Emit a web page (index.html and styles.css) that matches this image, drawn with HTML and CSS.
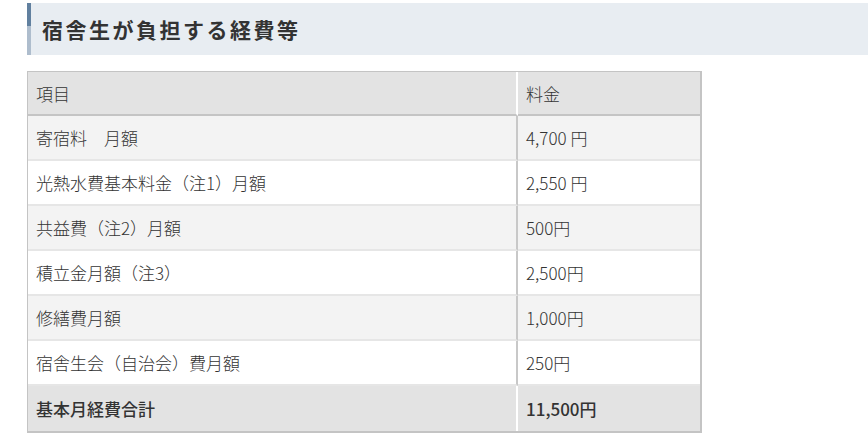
FILE: index.html
```html
<!DOCTYPE html>
<html lang="ja">
<head>
<meta charset="utf-8">
<link rel="stylesheet" href="styles.css">
</head>
<body>
<div class="page">
  <h2 class="heading">宿舎生が負担する経費等</h2>
  <table class="fees">
    <thead>
      <tr><th>項目</th><th>料金</th></tr>
    </thead>
    <tbody>
      <tr class="odd"><td>寄宿料　月額</td><td>4,700 円</td></tr>
      <tr class="even"><td>光熱水費基本料金（注1）月額</td><td>2,550 円</td></tr>
      <tr class="odd"><td>共益費（注2）月額</td><td>500円</td></tr>
      <tr class="even"><td>積立金月額（注3）</td><td>2,500円</td></tr>
      <tr class="odd"><td>修繕費月額</td><td>1,000円</td></tr>
      <tr class="even"><td>宿舎生会（自治会）費月額</td><td>250円</td></tr>
      <tr class="total"><td>基本月経費合計</td><td>11,500円</td></tr>
    </tbody>
  </table>
</div>
</body>
</html>
```
FILE: styles.css
```css
html, body {
  margin: 0;
  padding: 0;
  background: #fff;
  overflow: hidden;
}
body {
  font-family: "Noto Sans CJK JP", "Noto Sans", sans-serif;
  color: #333;
}
.page {
  padding: 3px 0 0 27px;
}
.heading {
  margin: 0;
  height: 52px;
  box-sizing: border-box;
  display: flex;
  align-items: center;
  padding-left: 11px;
  background: #e8edf2;
  border-left: 4px solid #6b86a4;
  border-image: linear-gradient(to bottom, #61809f 0, #61809f 45%, #aebdcd 45%, #aebdcd 100%) 1;
  font-size: 21px;
  font-weight: bold;
  letter-spacing: 2.5px;
  color: #333;
}
.fees {
  margin-top: 16px;
  width: 675px;
  border-collapse: separate;
  border-spacing: 0;
  border-top: 1px solid #c4c4c4;
  border-left: 1px solid #c4c4c4;
  border-right: 2px solid #c4c4c4;
  border-bottom: 2px solid #c4c4c4;
  font-size: 17px;
  font-weight: 300;
}
.fees th, .fees td {
  text-align: left;
  font-weight: 300;
  padding: 0 8px;
  height: 43px;
  box-sizing: border-box;
  color: #333;
}
.fees th:first-child, .fees td:first-child {
  width: 490px;
}
.fees th {
  background: #e3e3e3;
  height: 44px;
  border-bottom: 2px solid #c4c4c4;
}
.fees th:first-child {
  border-right: 2px solid #fff;
}
.fees td {
  border-bottom: 2px solid #e6e6e6;
  height: 45px;
}
.fees td:first-child {
  border-right: 2px solid #c8c8c8;
}
.odd td { background: #f3f3f3; }
.even td { background: #fff; }
.total td {
  background: #e3e3e3;
  font-weight: 500;
  border-bottom: 0;
}
.total td:first-child {
  border-right: 2px solid #fff;
}
```
